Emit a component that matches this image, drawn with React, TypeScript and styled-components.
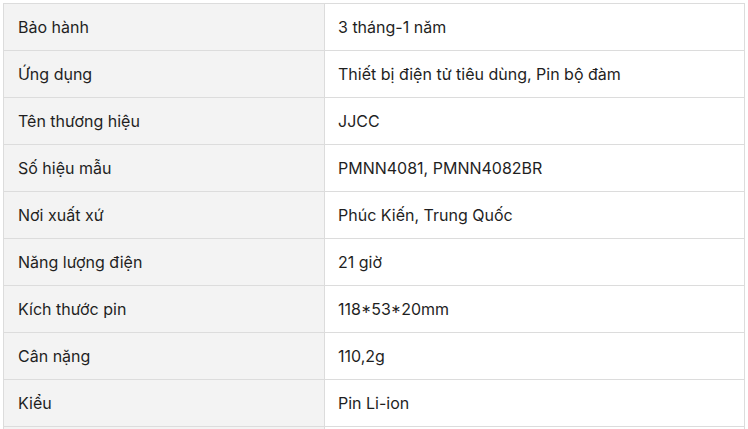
import React from "react";
import styled, { createGlobalStyle } from "styled-components";

const Global = createGlobalStyle`
  html, body { margin: 0; padding: 0; background: #fff; }
  body { font-family: Inter, "Noto Sans", sans-serif; }
`;

const Wrap = styled.div`
  padding: 3px;
`;

const Table = styled.table`
  width: 742px;
  border-collapse: collapse;
  table-layout: fixed;
  font-size: 16px;
  color: #1f1f1f;
`;

const Row = styled.tr``;

const Cell = styled.td<{ $label?: boolean }>`
  border: 1px solid #dcdcdc;
  height: 47px;
  padding: 0 0 0 ${(p) => (p.$label ? "14px" : "13px")};
  box-sizing: border-box;
  background: ${(p) => (p.$label ? "#f3f3f3" : "#fff")};
  width: ${(p) => (p.$label ? "321px" : "auto")};
  vertical-align: middle;
  line-height: 20px;
`;

const rows: [string, string][] = [
  ["Bảo hành", "3 tháng-1 năm"],
  ["Ứng dụng", "Thiết bị điện tử tiêu dùng, Pin bộ đàm"],
  ["Tên thương hiệu", "JJCC"],
  ["Số hiệu mẫu", "PMNN4081, PMNN4082BR"],
  ["Nơi xuất xứ", "Phúc Kiến, Trung Quốc"],
  ["Năng lượng điện", "21 giờ"],
  ["Kích thước pin", "118*53*20mm"],
  ["Cân nặng", "110,2g"],
  ["Kiểu", "Pin Li-ion"],
  ["", ""],
];

export default function App() {
  return (
    <>
      <Global />
      <Wrap>
        <Table>
          <tbody>
            {rows.map(([k, v], i) => (
              <Row key={i}>
                <Cell $label>{k}</Cell>
                <Cell>{v}</Cell>
              </Row>
            ))}
          </tbody>
        </Table>
      </Wrap>
    </>
  );
}
